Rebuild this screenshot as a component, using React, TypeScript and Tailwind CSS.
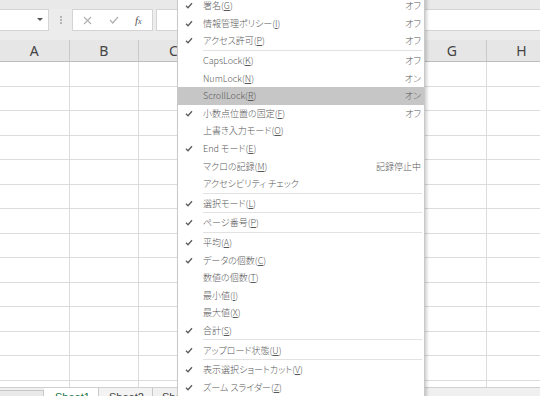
import * as React from "react"

type Item = {
  label: string
  accel?: string
  check?: boolean
  value?: string
  sep?: boolean
  active?: boolean
}

const menuItems: Item[] = [
  { label: "署名", accel: "G", check: true, value: "オフ" },
  { label: "情報管理ポリシー", accel: "I", check: true, value: "オフ" },
  { label: "アクセス許可", accel: "P", check: true, value: "オフ", sep: true },
  { label: "CapsLock", accel: "K", value: "オフ" },
  { label: "NumLock", accel: "N", value: "オン" },
  { label: "ScrollLock", accel: "R", value: "オン", active: true },
  { label: "小数点位置の固定", accel: "F", check: true, value: "オフ" },
  { label: "上書き入力モード", accel: "O" },
  { label: "End モード", accel: "E", check: true },
  { label: "マクロの記録", accel: "M", value: "記録停止中" },
  { label: "アクセシビリティ チェック", sep: true },
  { label: "選択モード", accel: "L", check: true, sep: true },
  { label: "ページ番号", accel: "P", check: true, sep: true },
  { label: "平均", accel: "A", check: true },
  { label: "データの個数", accel: "C", check: true },
  { label: "数値の個数", accel: "T" },
  { label: "最小値", accel: "I" },
  { label: "最大値", accel: "X" },
  { label: "合計", accel: "S", check: true, sep: true },
  { label: "アップロード状態", accel: "U", check: true, sep: true },
  { label: "表示選択ショートカット", accel: "V", check: true },
  { label: "ズーム スライダー", accel: "Z", check: true },
]

const columns = ["A", "B", "C", "D", "E", "F", "G", "H"]

function Check() {
  return (
    <svg width="8" height="7" viewBox="0 0 8 7">
      <path d="M1 3.7 L3 5.7 L7 1.2" fill="none" stroke="#5c5c5c" strokeWidth="1.3" />
    </svg>
  )
}

function FormulaBar() {
  return (
    <div className="flex h-[22px] bg-[#ececec]">
      {/* Name box */}
      <div className="relative w-[49px] bg-white border border-l-0 border-[#d4d4d4]">
        <span className="absolute right-[5px] top-[8px] w-0 h-0 border-l-[3px] border-r-[3px] border-t-[3px] border-l-transparent border-r-transparent border-t-[#555]" />
      </div>
      <div className="w-[23px] flex flex-col items-center justify-center gap-[1px]">
        <span className="w-[2px] h-[2px] bg-[#b5b5b5]" />
        <span className="w-[2px] h-[2px] bg-[#b5b5b5]" />
        <span className="w-[2px] h-[2px] bg-[#b5b5b5]" />
      </div>
      {/* Cancel / enter / function */}
      <div className="w-[81px] bg-white border border-[#d4d4d4] flex items-center">
        <svg className="ml-[10px]" width="9" height="9" viewBox="0 0 9 9">
          <path d="M1 1 L8 8 M8 1 L1 8" stroke="#b0b0b0" strokeWidth="1.1" />
        </svg>
        <svg className="ml-[17px]" width="10" height="8" viewBox="0 0 10 8">
          <path d="M1 4 L3.8 7 L9 1" fill="none" stroke="#b0b0b0" strokeWidth="1.2" />
        </svg>
        <span className="ml-[16px] text-[11px] italic text-[#555] font-['Liberation_Serif',serif] leading-none">
          f<span className="text-[8px]">x</span>
        </span>
      </div>
      <div className="w-[3px]" />
      <div className="flex-1 bg-white border border-r-0 border-[#d4d4d4]" />
    </div>
  )
}

function Sheet() {
  return (
    <div className="flex-1 overflow-hidden">
      <div className="grid grid-cols-[repeat(8,69.6px)] h-[22px] bg-[#e6e6e6] border-b border-[#bdbdbd]">
        {columns.map((c) => (
          <div
            key={c}
            className="border-r border-[#c9c9c9] flex items-center justify-center text-[14px] text-[#444] font-['Noto_Sans',sans-serif]"
          >
            {c}
          </div>
        ))}
      </div>
      {Array.from({ length: 14 }).map((_, r) => (
        <div key={r} className="grid grid-cols-[repeat(8,69.6px)] h-[24.5px]">
          {columns.map((c) => (
            <div key={c} className="border-r border-b border-[#dcdcdc]" />
          ))}
        </div>
      ))}
    </div>
  )
}

function SheetTabs() {
  return (
    <div className="h-[9px] bg-[#f0f0f0] border-t border-[#d0d0d0] flex text-[11px] leading-none font-['Liberation_Sans',sans-serif] overflow-hidden">
      <div className="w-[44px] mt-[2px] bg-[#e9e9e9] border-t border-r border-[#c8c8c8]" />
      <div className="w-[54px] bg-white pl-[11px] pt-[4px] text-[#217346]">Sheet1</div>
      <div className="w-[55px] border-l border-r border-[#c8c8c8] pl-[10px] pt-[4px] text-[#444] bg-[#f3f3f3]">Sheet2</div>
      <div className="pl-[9px] pt-[4px] text-[#444]">Sheet3</div>
    </div>
  )
}

function StatusMenu() {
  return (
    <div className="absolute left-[177px] top-[-4px] w-[248px] bg-white border border-[#c9c9c9] shadow-[2px_2px_3px_rgba(0,0,0,0.18)] text-[9px] leading-none text-[#585858] font-light font-['Noto_Sans_CJK_JP',sans-serif] [font-feature-settings:'palt']">
      {menuItems.map((item, i) => (
        <div key={i}>
          <div className={`flex items-center h-[17.6px] ${item.active ? "bg-[#c6c6c6]" : ""}`}>
            <span className="w-[21px] flex justify-center">{item.check && <Check />}</span>
            <span className="ml-[4px] whitespace-nowrap">
              {item.label}
              {item.accel && (
                <>
                  (<span className="underline underline-offset-[1px]">{item.accel}</span>)
                </>
              )}
            </span>
            {item.value && <span className="ml-auto pr-[3px] whitespace-nowrap">{item.value}</span>}
          </div>
          {item.sep && (
            <div className="h-[2px] pl-[25px] pr-[2px]">
              <div className="border-t border-[#e2e2e2]" />
            </div>
          )}
        </div>
      ))}
    </div>
  )
}

export default function App() {
  return (
    <div className="relative w-[540px] h-[396px] overflow-hidden bg-[#ececec] flex flex-col">
      <div className="h-[9px] bg-[#e9e9e9]" />
      <FormulaBar />
      <div className="h-[9px] bg-[#ececec]" />
      <div className="flex-1 flex flex-col bg-white overflow-hidden">
        <Sheet />
        <SheetTabs />
      </div>
      <StatusMenu />
    </div>
  )
}
